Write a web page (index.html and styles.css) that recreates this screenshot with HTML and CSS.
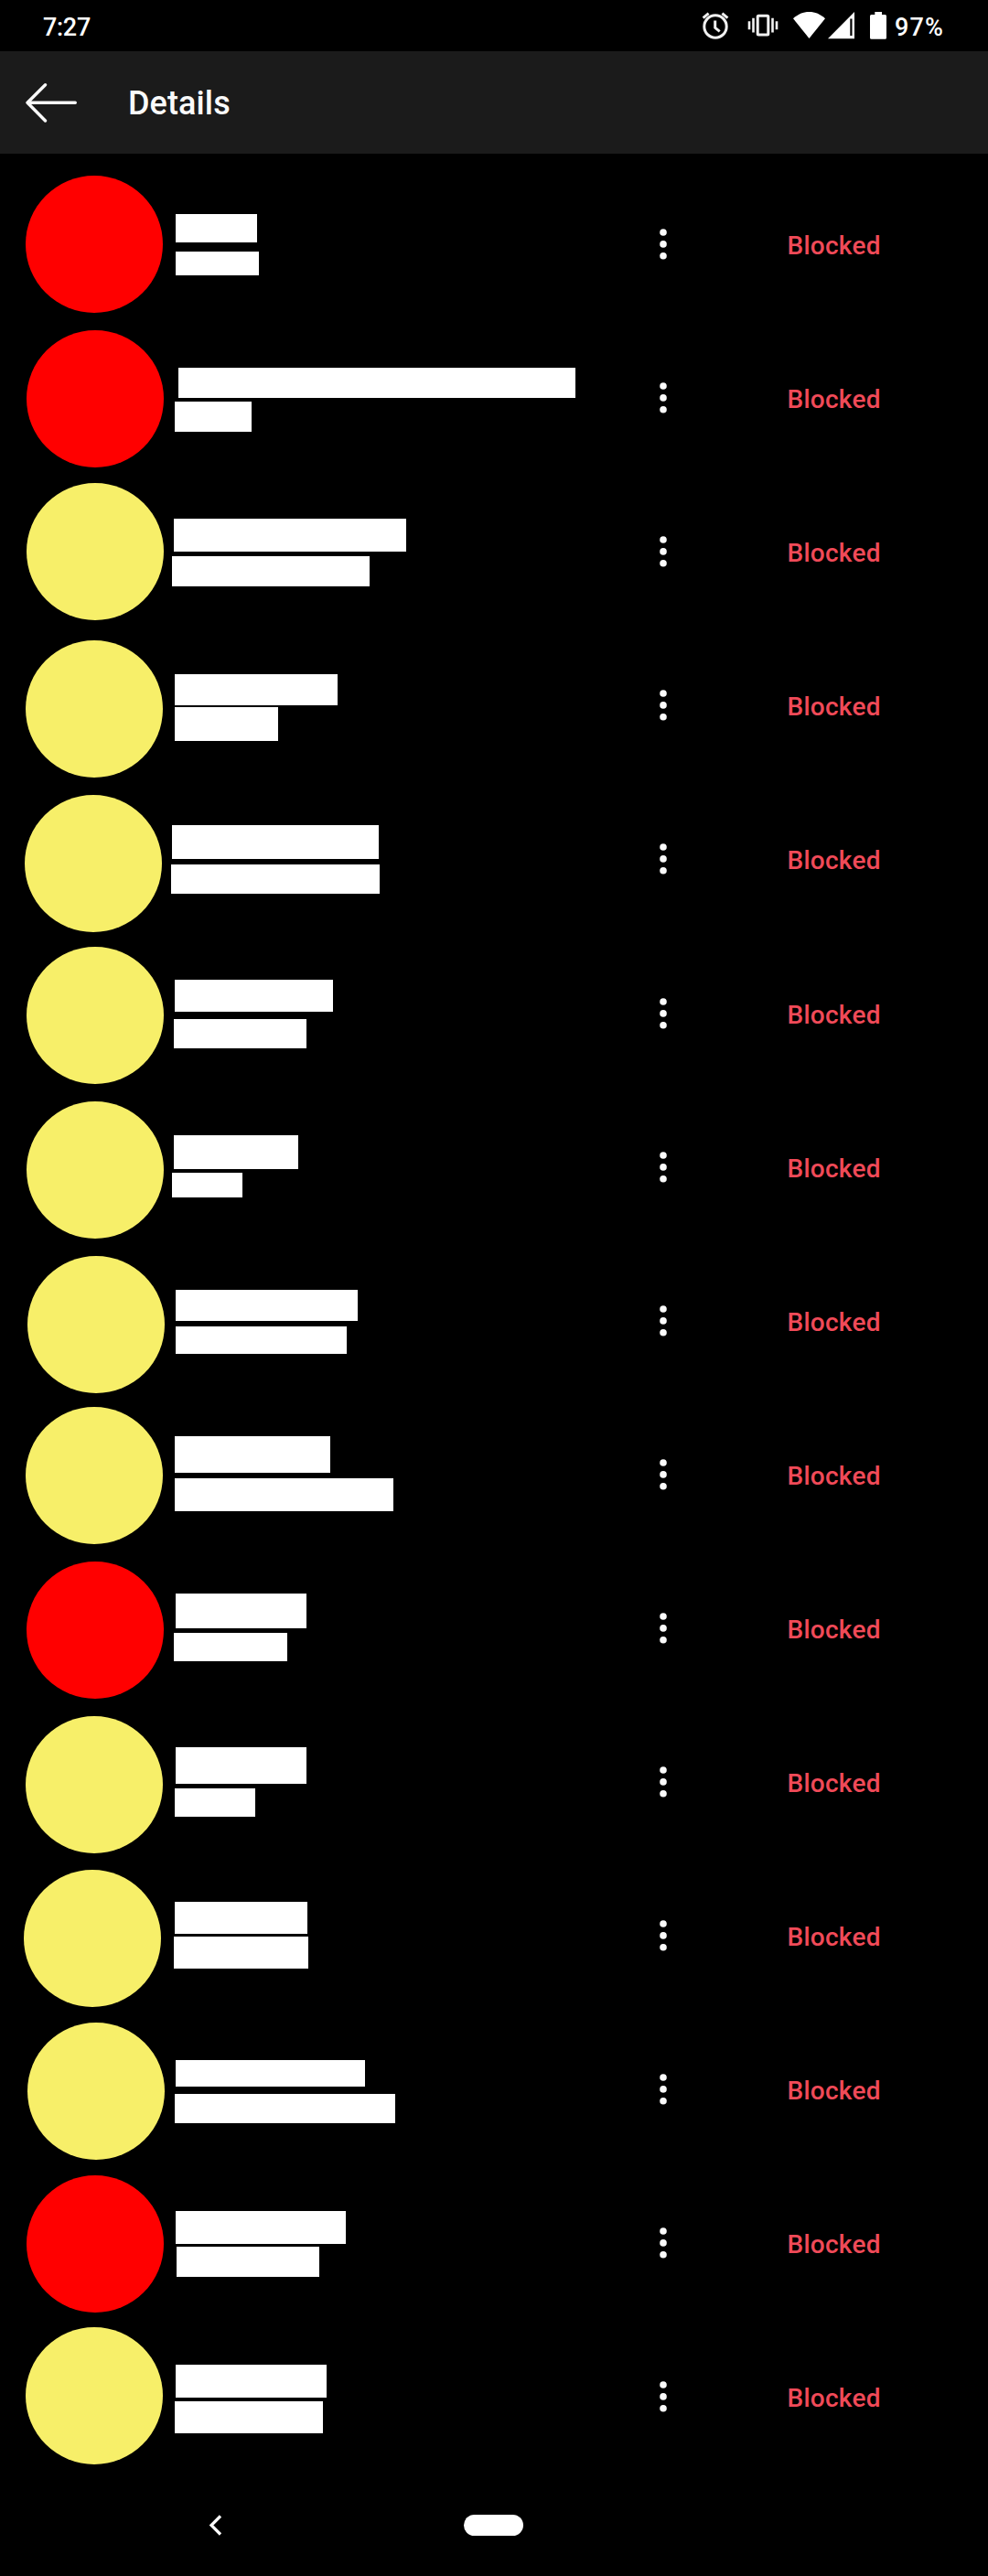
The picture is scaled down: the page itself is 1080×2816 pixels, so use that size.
FILE: index.html
```html
<!DOCTYPE html>
<html lang="en">
<head>
<meta charset="utf-8">
<title>Details</title>
<link rel="stylesheet" href="styles.css">
</head>
<body>
<div class="status-bar">
  <span class="clock">7:27</span>
  <svg class="status-icons" viewBox="764 8 210 40" aria-hidden="true">
    <g fill="none" stroke="#f1f1f1" stroke-width="3">
      <circle cx="782" cy="29" r="12.2"/>
      <path d="M768.6 19.6 774.6 14.6M789.4 14.6 795.4 19.6"/>
      <path d="M781.7 22.5v7.8l5 4"/>
      <rect x="828.2" y="17.3" width="11.6" height="20.8" rx="1"/>
      <path d="M823.5 19.8v15.6M844.5 19.8v15.6M819 23.2v9M849 23.2v9" stroke-width="2.6"/>
    </g>
    <g fill="#fff">
      <path d="M884.5 42 867 20.3C872 15.500 878 13 884.500 13S897 15.500 902 20.300z"/>
      <path fill-rule="evenodd" d="M905 42.300 934 13v29.300zM929.300 20.500v18.500h2.200v-18.500z"/>
      <path d="M956.300 13h7.700v3h3.500a1.500 1.500 0 0 1 1.500 1.500v23.700a1.500 1.500 0 0 1-1.500 1.500h-15a1.500 1.500 0 0 1-1.500-1.500v-23.700a1.500 1.500 0 0 1 1.500-1.500h3.800z"/>
    </g>
  </svg>
  <span class="battery-level">97%</span>
</div>
<header class="app-bar">
  <svg class="back" viewBox="0 0 60 44" aria-hidden="true"><path d="M24.500 2.700 5 22.200 24.500 42M5 22.200H57.300"/></svg>
  <h1>Details</h1>
</header>
<svg class="defs" width="0" height="0"><defs><g id="more"><circle cx="12" cy="7" r="3.800"/><circle cx="12" cy="19.900" r="3.800"/><circle cx="12" cy="32.700" r="3.800"/></g></defs></svg>
<main class="list">
  <div class="row">
    <span class="avatar red" style="margin:8.5px 0 0 27.5px"></span>
    <div class="info" style="padding-top:51px"><i style="width:89px;height:31px;margin-left:12px"></i><i style="width:91px;height:26px;margin:10px 0 0 12px"></i></div>
    <svg class="more" viewBox="0 0 24 40"><use href="#more"/></svg><span class="state">Blocked</span>
  </div>
  <div class="row">
    <span class="avatar red" style="margin:9.5px 0 0 28.5px"></span>
    <div class="info" style="padding-top:51px"><i style="width:434px;height:33px;margin-left:15px"></i><i style="width:84px;height:33px;margin:4px 0 0 11px"></i></div>
    <svg class="more" viewBox="0 0 24 40"><use href="#more"/></svg><span class="state">Blocked</span>
  </div>
  <div class="row">
    <span class="avatar" style="margin:8.5px 0 0 28.5px"></span>
    <div class="info" style="padding-top:48px"><i style="width:254px;height:36px;margin-left:10px"></i><i style="width:216px;height:33px;margin:5px 0 0 8px"></i></div>
    <svg class="more" viewBox="0 0 24 40"><use href="#more"/></svg><span class="state">Blocked</span>
  </div>
  <div class="row">
    <span class="avatar" style="margin:12.5px 0 0 27.5px"></span>
    <div class="info" style="padding-top:50px"><i style="width:178px;height:34px;margin-left:11px"></i><i style="width:113px;height:37px;margin:2px 0 0 11px"></i></div>
    <svg class="more" viewBox="0 0 24 40"><use href="#more"/></svg><span class="state">Blocked</span>
  </div>
  <div class="row tall">
    <span class="avatar" style="margin:13.5px 0 0 26.5px"></span>
    <div class="info" style="padding-top:47px"><i style="width:226px;height:37px;margin-left:8px"></i><i style="width:228px;height:32px;margin:6px 0 0 7px"></i></div>
    <svg class="more" viewBox="0 0 24 40"><use href="#more"/></svg><span class="state">Blocked</span>
  </div>
  <div class="row">
    <span class="avatar" style="margin:10.5px 0 0 28.5px"></span>
    <div class="info" style="padding-top:47px"><i style="width:173px;height:35px;margin-left:11px"></i><i style="width:145px;height:32px;margin:8px 0 0 10px"></i></div>
    <svg class="more" viewBox="0 0 24 40"><use href="#more"/></svg><span class="state">Blocked</span>
  </div>
  <div class="row">
    <span class="avatar" style="margin:11.5px 0 0 28.5px"></span>
    <div class="info" style="padding-top:49px"><i style="width:136px;height:37px;margin-left:10px"></i><i style="width:77px;height:27px;margin:4px 0 0 8px"></i></div>
    <svg class="more" viewBox="0 0 24 40"><use href="#more"/></svg><span class="state">Blocked</span>
  </div>
  <div class="row">
    <span class="avatar" style="margin:12.5px 0 0 29.5px"></span>
    <div class="info" style="padding-top:50px"><i style="width:199px;height:34px;margin-left:12px"></i><i style="width:187px;height:30px;margin:6px 0 0 12px"></i></div>
    <svg class="more" viewBox="0 0 24 40"><use href="#more"/></svg><span class="state">Blocked</span>
  </div>
  <div class="row">
    <span class="avatar" style="margin:9.5px 0 0 27.5px"></span>
    <div class="info" style="padding-top:42px"><i style="width:170px;height:40px;margin-left:11px"></i><i style="width:239px;height:36px;margin:6px 0 0 11px"></i></div>
    <svg class="more" viewBox="0 0 24 40"><use href="#more"/></svg><span class="state">Blocked</span>
  </div>
  <div class="row">
    <span class="avatar red" style="margin:10.5px 0 0 28.5px"></span>
    <div class="info" style="padding-top:46px"><i style="width:143px;height:38px;margin-left:12px"></i><i style="width:124px;height:31px;margin:5px 0 0 10px"></i></div>
    <svg class="more" viewBox="0 0 24 40"><use href="#more"/></svg><span class="state">Blocked</span>
  </div>
  <div class="row">
    <span class="avatar" style="margin:11.5px 0 0 27.5px"></span>
    <div class="info" style="padding-top:46px"><i style="width:143px;height:40px;margin-left:12px"></i><i style="width:88px;height:31px;margin:5px 0 0 11px"></i></div>
    <svg class="more" viewBox="0 0 24 40"><use href="#more"/></svg><span class="state">Blocked</span>
  </div>
  <div class="row">
    <span class="avatar" style="margin:11.5px 0 0 25.5px"></span>
    <div class="info" style="padding-top:47px"><i style="width:145px;height:35px;margin-left:11px"></i><i style="width:147px;height:35px;margin:3px 0 0 10px"></i></div>
    <svg class="more" viewBox="0 0 24 40"><use href="#more"/></svg><span class="state">Blocked</span>
  </div>
  <div class="row">
    <span class="avatar" style="margin:10.5px 0 0 29.5px"></span>
    <div class="info" style="padding-top:52px"><i style="width:207px;height:29px;margin-left:12px"></i><i style="width:241px;height:32px;margin:8px 0 0 11px"></i></div>
    <svg class="more" viewBox="0 0 24 40"><use href="#more"/></svg><span class="state">Blocked</span>
  </div>
  <div class="row">
    <span class="avatar red" style="margin:9.5px 0 0 28.5px"></span>
    <div class="info" style="padding-top:49px"><i style="width:186px;height:36px;margin-left:12px"></i><i style="width:156px;height:33px;margin:3px 0 0 13px"></i></div>
    <svg class="more" viewBox="0 0 24 40"><use href="#more"/></svg><span class="state">Blocked</span>
  </div>
  <div class="row">
    <span class="avatar" style="margin:7.5px 0 0 27.5px"></span>
    <div class="info" style="padding-top:49px"><i style="width:165px;height:36px;margin-left:12px"></i><i style="width:162px;height:35px;margin:4px 0 0 11px"></i></div>
    <svg class="more" viewBox="0 0 24 40"><use href="#more"/></svg><span class="state">Blocked</span>
  </div>
</main>
<nav class="nav-bar">
  <svg class="nav-back" viewBox="0 0 16 24" aria-hidden="true"><path d="M13 1.500 3 11.500 13 21.500"/></svg>
  <span class="home-pill"></span>
</nav>
</body>
</html>
```
FILE: styles.css
```css
* { box-sizing: border-box; }
body {
  margin: 0;
  width: 1080px;
  height: 2816px;
  display: flex;
  flex-direction: column;
  background: #000;
  color: #fff;
  font-family: Roboto, "Liberation Sans", sans-serif;
  font-weight: 500;
  overflow: hidden;
}
.defs { display: none; }
.status-bar {
  height: 56px;
  display: flex;
  align-items: center;
  padding: 4px 0 0 47px;
  font-size: 27px;
  line-height: 32px;
}
.clock { width: 717px; letter-spacing: -0.3px; }
.status-icons { width: 210px; height: 40px; margin-top: -4px; }
.battery-level { margin-left: 4px; letter-spacing: 1.1px; }
.app-bar {
  height: 112px;
  display: flex;
  align-items: center;
  padding-left: 25px;
  background: #1b1b1b;
}
.back {
  width: 60px;
  height: 44px;
  fill: none;
  stroke: #fafafa;
  stroke-width: 3.4;
  stroke-linecap: round;
  stroke-linejoin: round;
}
.app-bar h1 {
  margin: 2px 0 0 55px;
  font-size: 36px;
  line-height: 44px;
  font-weight: 500;
  letter-spacing: 0.1px;
  color: #fafafa;
}
.list { padding-top: 15px; }
.row {
  height: 168px;
  display: grid;
  grid-template-columns: 180px 533px 24px 1fr;
}
.row.tall { height: 169px; }
.avatar {
  width: 150px;
  height: 150px;
  border-radius: 50%;
  background: #f7ef69;
}
.avatar.red { background: #f00; }
.info { display: flex; flex-direction: column; }
.info i { display: block; flex: none; background: #fff; }
.more { width: 24px; height: 40px; margin-top: 64px; fill: #fafafa; }
.state {
  margin: 70px 0 0 123.5px;
  font-size: 28px;
  line-height: 32px;
  letter-spacing: 0.25px;
  color: #f04a58;
}
.nav-bar {
  flex: 1;
  display: flex;
  align-items: flex-start;
  padding: 45px 0 0 228px;
}
.nav-back {
  width: 16px;
  height: 24px;
  fill: none;
  stroke: #fff;
  stroke-width: 3.2;
}
.home-pill {
  width: 65px;
  height: 23px;
  margin-left: 263px;
  border-radius: 12px;
  background: #fff;
}
```
